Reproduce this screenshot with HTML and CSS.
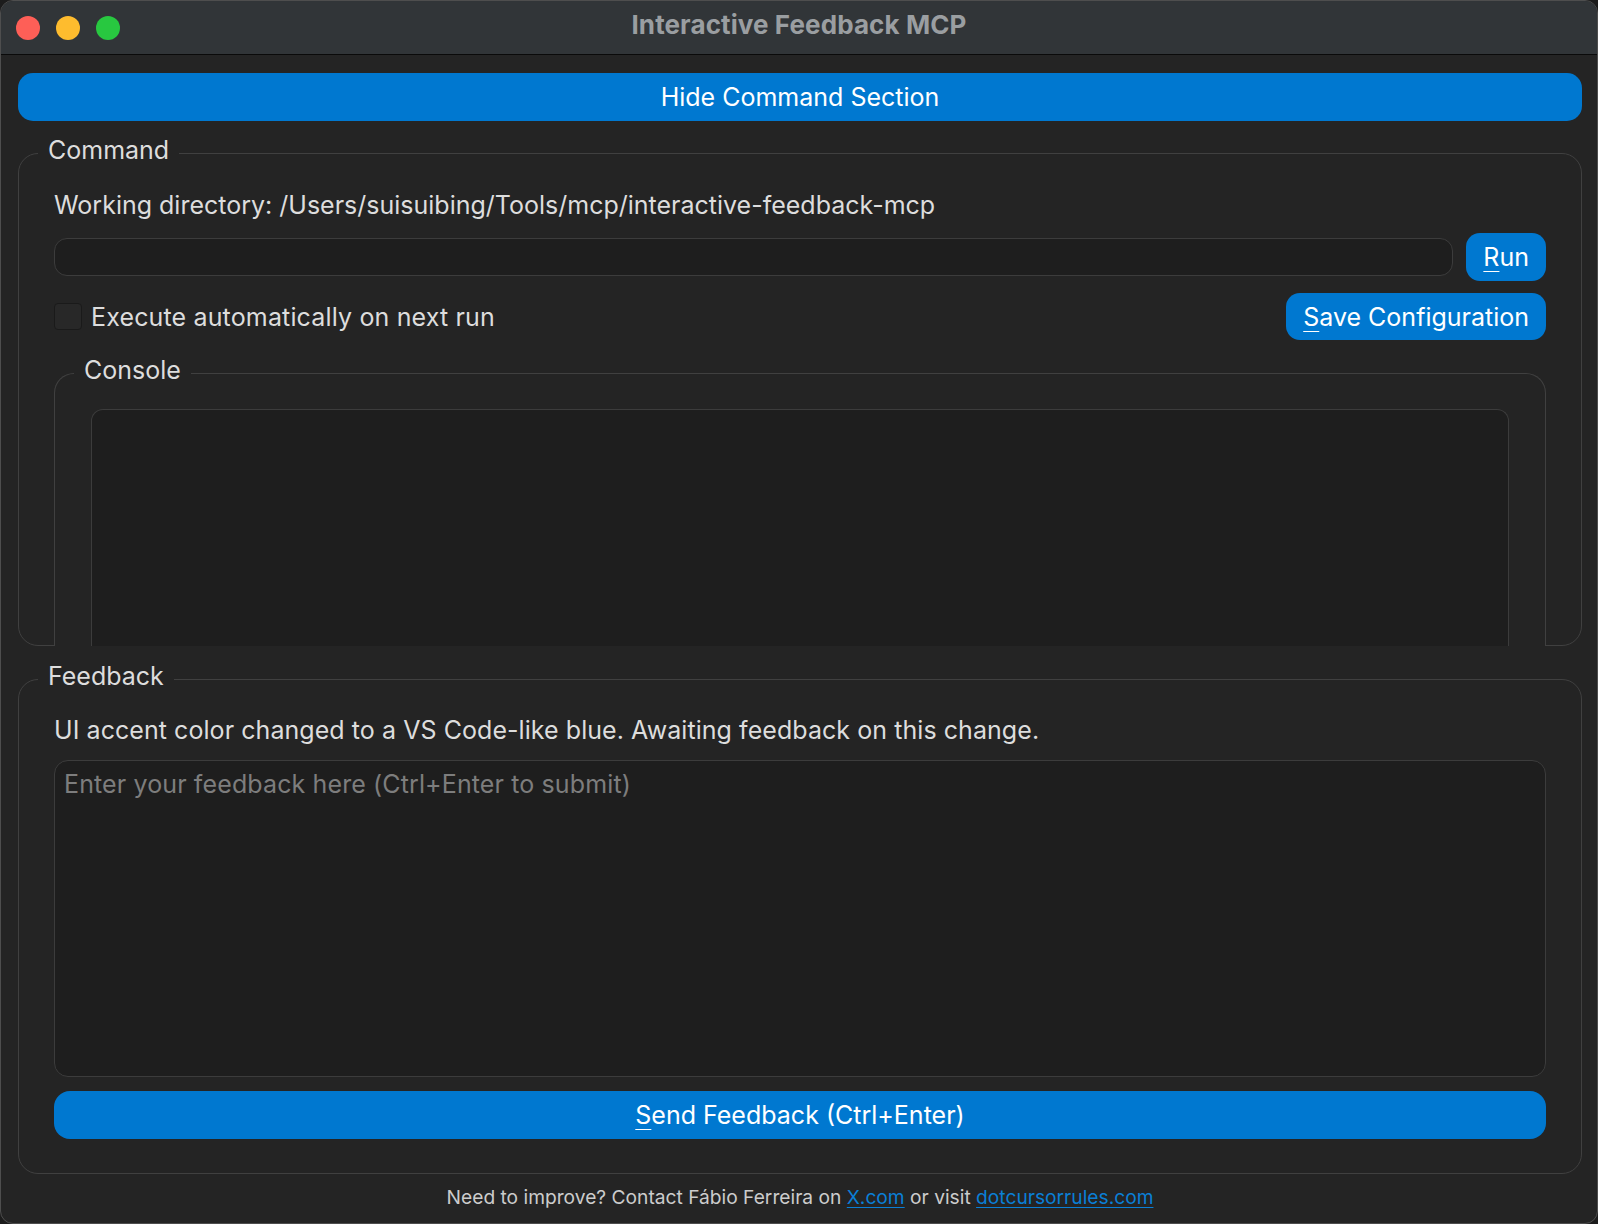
FILE: index.html
```html
<!DOCTYPE html>
<html lang="en">
<head>
<meta charset="utf-8">
<title>Interactive Feedback MCP</title>
<link rel="stylesheet" href="styles.css">
</head>
<body>
<div class="window">
  <header class="titlebar">
    <div class="lights">
      <span class="light light-close"></span>
      <span class="light light-min"></span>
      <span class="light light-max"></span>
    </div>
    <div class="title">Interactive Feedback MCP</div>
    <div class="titlebar-spacer"></div>
  </header>
  <main class="content">
    <button class="btn btn-wide" type="button">Hide Command Section</button>

    <fieldset class="group group-command">
      <legend class="group-title">Command</legend>
      <div class="group-body command-body">
        <div class="label">Working directory: /Users/suisuibing/Tools/mcp/interactive-feedback-mcp</div>
        <div class="row row-run">
          <input class="cmd-input" type="text">
          <button class="btn btn-small" type="button"><u>R</u>un</button>
        </div>
        <div class="row row-options">
          <label class="check">
            <input class="check-box" type="checkbox">
            <span class="check-text">Execute automatically on next run</span>
          </label>
          <button class="btn btn-small" type="button"><u>S</u>ave Configuration</button>
        </div>
        <fieldset class="group group-console">
          <legend class="group-title">Console</legend>
          <div class="group-body console-body">
            <div class="console-output"></div>
          </div>
        </fieldset>
      </div>
    </fieldset>

    <fieldset class="group group-feedback">
      <legend class="group-title">Feedback</legend>
      <div class="group-body feedback-body">
        <div class="label label-wide">UI accent color changed to a VS Code-like blue. Awaiting feedback on this change.</div>
        <textarea class="feedback-input" placeholder="Enter your feedback here (Ctrl+Enter to submit)"></textarea>
        <button class="btn btn-send" type="button"><u>S</u>end Feedback (Ctrl+Enter)</button>
      </div>
    </fieldset>

    <footer class="footer">Need to improve? Contact Fábio Ferreira on <a class="link" href="#">X.com</a> or visit <a class="link" href="#">dotcursorrules.com</a></footer>
  </main>
</div>
</body>
</html>
```
FILE: styles.css
```css
* {
  box-sizing: border-box;
}

html, body {
  margin: 0;
  padding: 0;
  background: #1c1c1c;
}

body {
  font-family: "Inter", "Noto Sans", sans-serif;
  font-size: 25px;
  color: #dddddd;
}

.window {
  height: 100vh;
  background: #242424;
  border: 1px solid #4e4e4e;
  border-radius: 13px;
  overflow: hidden;
}

/* Title bar */
.titlebar {
  height: 53px;
  background: #313538;
  border-bottom: 1px solid #0a0a0a;
  display: grid;
  grid-template-columns: 1fr auto 1fr;
  align-items: center;
  box-sizing: content-box;
}

.lights {
  display: flex;
  gap: 16px;
  padding-left: 15px;
  padding-top: 1px;
}

.light {
  width: 24px;
  height: 24px;
  border-radius: 50%;
  display: block;
}

.light-close { background: #fe5f57; }
.light-min { background: #febc2e; }
.light-max { background: #28c840; }

.title {
  font-size: 26px;
  font-weight: 700;
  letter-spacing: 0.1px;
  color: #9a9ea1;
  padding-bottom: 6px;
  line-height: 30px;
}

/* Content */
.content {
  padding: 18px 15px 0 17px;
}

.btn {
  font-family: inherit;
  font-size: 25px;
  line-height: 30px;
  color: #ffffff;
  background: #0078d0;
  border: none;
  margin: 0;
  cursor: pointer;
}

.btn u {
  text-decoration-thickness: 1px;
  text-underline-offset: 5px;
}

.btn-wide {
  display: block;
  width: 100%;
  height: 48px;
  border-radius: 15px;
}

.btn-small {
  height: 48px;
  padding: 0 17px;
  border-radius: 14px;
  white-space: nowrap;
}

.row-options .btn-small {
  height: 47px;
}

.btn-send {
  display: block;
  width: 100%;
  height: 48px;
  margin-top: 14px;
  border-radius: 16px;
}

/* Group boxes */
.group {
  margin: 0;
  padding: 0;
  min-width: 0;
  border: 1px solid #404040;
  border-radius: 20px;
}

.group-title {
  margin-left: 19px;
  padding: 0 10px 7px;
  line-height: 30px;
  color: #dddddd;
}

.group-command {
  margin-top: 14px;
}

.command-body {
  height: 474px;
  margin-bottom: -1px;
  padding: 18px 35px 0;
}

.label {
  line-height: 30px;
  white-space: nowrap;
}

.label-wide {
  letter-spacing: 0.06px;
}

.row {
  display: flex;
  align-items: center;
}

.row-run {
  margin-top: 13px;
  gap: 13px;
}

.row-options {
  margin-top: 12px;
  justify-content: space-between;
}

.cmd-input {
  flex: 1;
  height: 38px;
  background: #1e1e1e;
  border: 1px solid #3c3c3c;
  border-radius: 13px;
  color: #dddddd;
  font-family: inherit;
  font-size: 25px;
  padding: 0 10px;
  outline: none;
}

.check {
  display: flex;
  align-items: center;
  gap: 9px;
  line-height: 30px;
}

.check-text {
  letter-spacing: 0.15px;
}

.check-box {
  appearance: none;
  -webkit-appearance: none;
  margin: 0;
  width: 28px;
  height: 27px;
  background: #282828;
  border: 1px solid #1a1a1a;
  border-radius: 4px;
}

.group-console {
  margin-top: 15px;
  height: 291px;
  background: #242424;
  border-bottom: none;
  border-radius: 20px 20px 0 0;
}

.console-body {
  padding: 17px 36px 0;
}

.console-output {
  height: 237px;
  background: #1e1e1e;
  border: 1px solid #3c3c3c;
  border-bottom: none;
  border-radius: 12px 12px 0 0;
}

.group-feedback {
  margin-top: 15px;
}

.feedback-body {
  padding: 17px 35px 34px;
}

.feedback-input {
  display: block;
  width: 100%;
  height: 317px;
  margin-top: 15px;
  background: #1e1e1e;
  border: 1px solid #3c3c3c;
  border-radius: 14px;
  color: #dddddd;
  font-family: inherit;
  font-size: 25px;
  line-height: 30px;
  letter-spacing: 0.12px;
  padding: 8px 9px;
  resize: none;
  outline: none;
}

.feedback-input::placeholder {
  color: #7d7d7d;
}

.footer {
  margin-top: 12px;
  text-align: center;
  font-size: 19.2px;
  line-height: 23px;
  color: #cccccc;
}

.link {
  color: #0a7fd6;
  text-decoration: underline;
  text-decoration-thickness: 1px;
  text-underline-offset: 3px;
}
```
